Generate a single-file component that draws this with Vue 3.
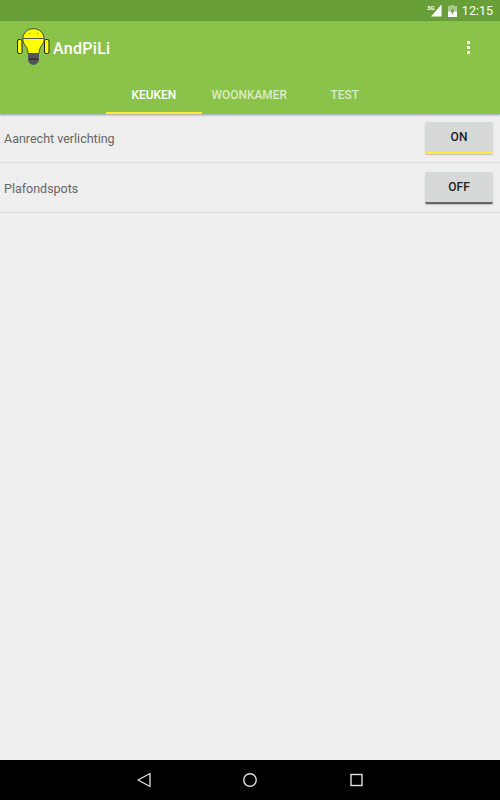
<script setup>
const tabs = [
  { label: 'KEUKEN', active: true },
  { label: 'WOONKAMER', active: false },
  { label: 'TEST', active: false },
]
const rows = [
  { name: 'Aanrecht verlichting', state: 'ON' },
  { name: 'Plafondspots', state: 'OFF' },
]
</script>

<template>
  <div class="screen">
    <div class="status">
      <svg class="sig" width="15" height="13" viewBox="0 0 15 13">
        <path d="M14.500 .5V12.500H4Z" fill="#fff" />
        <text x="0" y="6" class="three-g">3G</text>
      </svg>
      <svg class="bat" width="9" height="12" viewBox="0 0 9 12">
        <path d="M3 0H6V1H9V12H0V1H3Z" fill="#fff" fill-opacity=".45" />
        <path d="M0 6.500H9V12H0Z" fill="#fff" />
        <path d="M5 2.500L2.500 7H4L3.500 10.500L6.500 5.500H4.800Z" fill="#689f38" />
      </svg>
      <span class="clock">12:15</span>
    </div>
    <header class="bar">
      <div class="top">
        <svg class="logo" width="34" height="38" viewBox="0 0 34 38">
          <rect x="1.500" y="11.500" width="4.500" height="14" rx="1.500" fill="#ffff00" stroke="#222" />
          <rect x="28.500" y="11.500" width="4.500" height="14" rx="1.500" fill="#ffff00" stroke="#222" />
          <path d="M17.500 .7C11.500 .7 6.800 5 6.800 11C6.800 14.500 8.500 16.500 10 18.500C11.200 20.200 11.800 22.500 12 25.500H23C23.200 22.500 23.800 20.200 25 18.500C26.500 16.500 28.200 14.500 28.200 11C28.200 5 23.500 .7 17.500 .7Z" fill="#ffff00" stroke="#444" />
          <path d="M7 10.500H28" stroke="#555" />
          <circle cx="13.500" cy="5.500" r=".7" fill="#888" />
          <circle cx="21.500" cy="5.500" r=".7" fill="#888" />
          <path d="M12 25.500H23V32C23 34 20 37 17.500 37C15 37 12 34 12 32Z" fill="#555" />
          <path d="M13 30.500H22V32H13Z" fill="#333" />
        </svg>
        <span class="title">AndPiLi</span>
        <div class="menu"><i></i><i></i><i></i></div>
      </div>
      <nav class="tabs">
        <div v-for="t in tabs" :key="t.label" class="tab" :class="{ active: t.active }">{{ t.label }}</div>
      </nav>
    </header>
    <main class="list">
      <div v-for="r in rows" :key="r.name" class="row">
        <span class="name">{{ r.name }}</span>
        <button class="toggle" :class="r.state === 'ON' ? 'on' : 'off'">{{ r.state }}</button>
      </div>
    </main>
    <footer class="nav">
      <svg width="16" height="16" viewBox="0 0 16 16">
        <path d="M14 1.500V14.500L2 8Z" fill="none" stroke="#e0e0e0" stroke-width="1.300" stroke-linejoin="round" />
      </svg>
      <svg width="16" height="16" viewBox="0 0 16 16">
        <circle cx="8" cy="8" r="6.250" fill="none" stroke="#e0e0e0" stroke-width="1.400" />
      </svg>
      <svg width="16" height="16" viewBox="0 0 16 16">
        <rect x="3" y="2.500" width="11" height="11" fill="none" stroke="#e0e0e0" stroke-width="1.400" />
      </svg>
    </footer>
  </div>
</template>

<style>
html, body { margin: 0; padding: 0; }
</style>

<style scoped>
.screen {
  width: 500px;
  height: 800px;
  display: flex;
  flex-direction: column;
  background: #eeeeee;
  font-family: Roboto, "Liberation Sans", sans-serif;
  overflow: hidden;
}
.status {
  height: 21px;
  flex: none;
  background: #689f38;
  display: flex;
  align-items: center;
  justify-content: flex-end;
  padding-right: 7px;
  color: #fff;
}
.sig { margin-right: 6px; }
.three-g { font-size: 6px; font-weight: 700; fill: #fff; }
.bat { margin-right: 5px; }
.clock { font-size: 12.500px; }
.bar {
  flex: none;
  height: 93px;
  background: #8bc34a;
  display: flex;
  flex-direction: column;
  box-shadow: 0 1px 2px rgba(0, 0, 0, .35);
  position: relative;
  z-index: 1;
}
.top {
  height: 57px;
  display: flex;
  align-items: center;
  padding-left: 16px;
}
.logo { margin-right: 3px; margin-bottom: 5px; }
.title { color: #fff; font-size: 16px; font-weight: 500; letter-spacing: .3px; margin-bottom: 2px; }
.menu {
  margin-left: auto;
  margin-right: 30px;
  margin-bottom: 4px;
  display: flex;
  flex-direction: column;
  gap: 2px;
}
.menu i { width: 3px; height: 3px; background: #fff; display: block; }
.tabs {
  flex: 1;
  display: flex;
  padding-left: 106px;
}
.tab {
  font-size: 11.900px;
  font-weight: 500;
  color: rgba(255, 255, 255, .7);
  display: flex;
  align-items: center;
  justify-content: center;
  box-sizing: border-box;
  height: 36px;
  padding: 0 10px 3px;
  min-width: 95.500px;
}
.tab.active { color: #fff; border-bottom: 2px solid #ffeb3b; padding-bottom: 1px; }
.list { flex: 1; margin-top: -1px; }
.row {
  height: 49px;
  border-bottom: 1px solid #dcdcdc;
  display: flex;
  align-items: center;
  justify-content: space-between;
  padding: 0 7px 0 4px;
}
.name { font-size: 12.500px; color: #666; margin-top: 2px; }
.toggle {
  width: 68px;
  height: 32px;
  margin-top: 1px;
  border: 0;
  border-radius: 2px;
  background: #d7d8d8;
  box-shadow: 0 1px 1px rgba(0, 0, 0, .2);
  font: 500 12px Roboto, "Liberation Sans", sans-serif;
  color: #222;
  padding: 0;
}
.toggle.on { border-bottom: 2px solid #ffeb3b; }
.toggle.off { border-bottom: 2px solid #666; }
.nav {
  flex: none;
  height: 40px;
  background: #000;
  display: flex;
  align-items: center;
  justify-content: space-between;
  padding: 0 136px;
}
</style>
